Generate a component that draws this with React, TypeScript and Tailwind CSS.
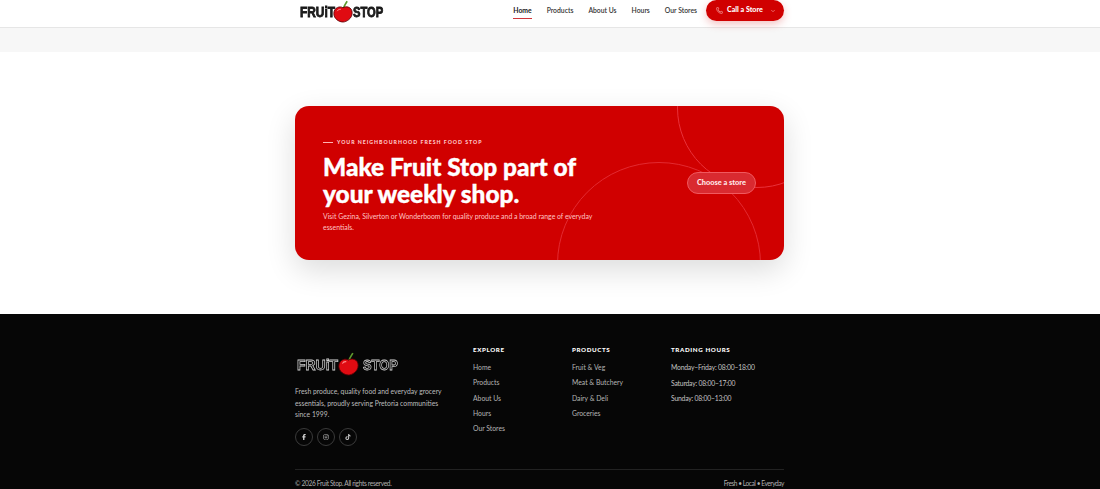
import { Phone, ChevronDown } from "lucide-react";
import { FaFacebookF, FaInstagram, FaTiktok } from "react-icons/fa6";

function Cherry({ size }: { size: number }) {
  return (
    <svg width={size} height={size} viewBox="0 0 24 24" className="shrink-0 overflow-visible">
      <path d="M12.5 8 C13 5 15 2 17 -1" stroke="#5f9a2e" strokeWidth="2" fill="none" />
      <path d="M12 7 C15 4.5 23 5.5 23 13 C23 20 16 24 12 24 C7 24 1 20 1 14 C1 6 9 4.5 12 7 Z" fill="#e00b12" stroke="#5a0005" strokeWidth="1" />
      <path d="M5 11 C6 9 8 8.5 9.5 8.8" stroke="#ff8a8a" strokeWidth="1.2" fill="none" />
    </svg>
  );
}

function LogoLight() {
  return (
    <div className="flex items-center font-['Liberation_Sans',sans-serif] text-[14px] leading-none font-bold text-[#222222] antialiased will-change-transform [-webkit-text-stroke:0.8px_#111111]">
      <span className="block w-[33px] origin-left scale-x-[0.85]">FRUiT</span>
      <Cherry size={20} />
      <span className="block w-[30px] origin-left scale-x-[0.8]">STOP</span>
    </div>
  );
}

function LogoDark() {
  return (
    <div className="flex items-center font-['Liberation_Sans',sans-serif] text-[15.5px] leading-none font-bold text-[#060606] antialiased will-change-transform [-webkit-text-stroke:0.8px_#cfcfcf]">
      <span className="block w-[41px] origin-left scale-x-[0.9]">FRUiT</span>
      <Cherry size={21} />
      <span className="ml-[4px] block w-[35px] origin-left scale-x-[0.83]">STOP</span>
    </div>
  );
}

const explore = ["Home", "Products", "About Us", "Hours", "Our Stores"];
const products = ["Fruit & Veg", "Meat & Butchery", "Dairy & Deli", "Groceries"];
const hours = ["Monday–Friday: 08:00–18:00", "Saturday: 08:00–17:00", "Sunday: 08:00–13:00"];

function Column({ title, items, cls, gap }: { title: string; items: string[]; cls: string; gap: string }) {
  return (
    <div>
      <h4 className="text-[6.2px] leading-[9px] font-black tracking-[0.1em] text-white uppercase">{title}</h4>
      <ul className={`mt-[9px] flex flex-col ${gap}`}>
        {items.map((t) => (
          <li key={t} className={`text-[6.8px] leading-[9.5px] ${cls}`}>{t}</li>
        ))}
      </ul>
    </div>
  );
}

export default function App() {
  return (
    <div className="h-[489px] w-[1100px] overflow-hidden bg-white font-['Lato',sans-serif]">
      <header className="h-[28px] border-b border-[#e6e6e6] bg-white">
        <div className="ml-[295px] flex h-[21px] w-[489px] items-center justify-between">
          <div className="ml-[5px] mt-[2px]"><LogoLight /></div>
          <nav className="flex h-full items-center gap-[15px]">
            <span className="relative text-[6.8px] font-bold text-[#1a1a1a]">
              Home
              <span className="absolute -bottom-[3px] left-0 h-[1px] w-full bg-[#d0343a]" />
            </span>
            <span className="text-[6.8px] font-semibold text-[#333333]">Products</span>
            <span className="text-[6.8px] font-semibold text-[#333333]">About Us</span>
            <span className="text-[6.8px] font-semibold text-[#333333]">Hours</span>
            <span className="text-[6.8px] font-semibold text-[#333333]">Our Stores</span>
            <div className="-ml-[6px] flex h-[21px] w-[78px] items-center rounded-full bg-[#d00000] pl-[10px] shadow-[0_3px_8px_rgba(208,0,0,0.25)]">
              <Phone size={7} className="text-[#ffc4c4]" />
              <span className="ml-[4px] text-[7.1px] font-black text-white">Call a Store</span>
              <ChevronDown size={6} className="ml-[7px] text-[#ffc4c4]" />
            </div>
          </nav>
        </div>
      </header>
      <div className="h-[24px] bg-[#f7f7f7]" />
      <section className="h-[262px] pt-[54px]">
        <div className="relative ml-[295px] flex h-[154px] w-[489px] items-center justify-between overflow-hidden rounded-[14px] bg-[#d00000] pl-[28px] pr-[28px] shadow-[0_10px_30px_rgba(0,0,0,0.14)]">
          <div className="absolute left-[382px] -top-[78px] h-[160px] w-[160px] rounded-full border border-[#e8313a]" />
          <div className="absolute left-[262px] top-[56px] h-[204px] w-[204px] rounded-full border border-[#e22a31]" />
          <div className="relative w-[272px] pt-[6px]">
            <div className="flex items-center gap-[4px]">
              <span className="h-[1px] w-[10px] bg-[#ffb3b3]" />
              <span className="text-[5.2px] leading-[7px] font-black tracking-[0.19em] text-[#ffc9c9] uppercase">Your neighbourhood fresh food stop</span>
            </div>
            <h2 className="mt-[7px] text-[24.4px] leading-[27px] font-black text-white [-webkit-text-stroke:0.4px_#ffffff]">
              Make Fruit Stop part of your weekly shop.
            </h2>
            <p className="mt-[4px] text-[6.9px] leading-[11.5px] text-[#ffc4c4]">
              Visit Gezina, Silverton or Wonderboom for quality produce and a broad range of everyday essentials.
            </p>
          </div>
          <div className="relative flex h-[22px] w-[69px] items-center justify-center rounded-full border border-[#f0595f] bg-[#d92a30] text-[7.4px] font-black text-[#ffe9e9]">
            Choose a store
          </div>
        </div>
      </section>
      <footer className="h-[175px] bg-[#060606]">
        <div className="ml-[295px] w-[489px] pt-[31px]">
          <div className="flex h-[124px]">
            <div className="w-[178px]">
              <div className="ml-[2px] mt-[5px] flex h-[28px] items-center"><LogoDark /></div>
              <p className="mt-[8px] w-[152px] text-[6.8px] leading-[11.6px] text-[#bdbdbd]">
                Fresh produce, quality food and everyday grocery essentials, proudly serving Pretoria communities since 1999.
              </p>
              <div className="mt-[7px] flex gap-[4px]">
                {[FaFacebookF, FaInstagram, FaTiktok].map((Icon, i) => (
                  <span key={i} className="flex h-[18px] w-[18px] items-center justify-center rounded-full border border-[#3a3a3a] text-[#cfcfcf]">
                    <Icon size={6} />
                  </span>
                ))}
              </div>
            </div>
            <div className="w-[99px]"><Column title="Explore" items={explore} cls="text-[#b5b5b5]" gap="gap-[5.8px]" /></div>
            <div className="w-[99px]"><Column title="Products" items={products} cls="text-[#b5b5b5]" gap="gap-[5.8px]" /></div>
            <div><Column title="Trading Hours" items={hours} cls="tracking-[-0.03em] text-[#c4c4c4]" gap="gap-[6px]" /></div>
          </div>
          <div className="flex h-[20px] items-end justify-between border-t border-[#222222] pb-[1px] text-[6.6px] leading-[9px] text-[#b0b0b0]">
            <span className="tracking-[-0.05em]">© 2026 Fruit Stop. All rights reserved.</span>
            <span className="tracking-[-0.07em]">Fresh • Local • Everyday</span>
          </div>
        </div>
      </footer>
    </div>
  );
}
